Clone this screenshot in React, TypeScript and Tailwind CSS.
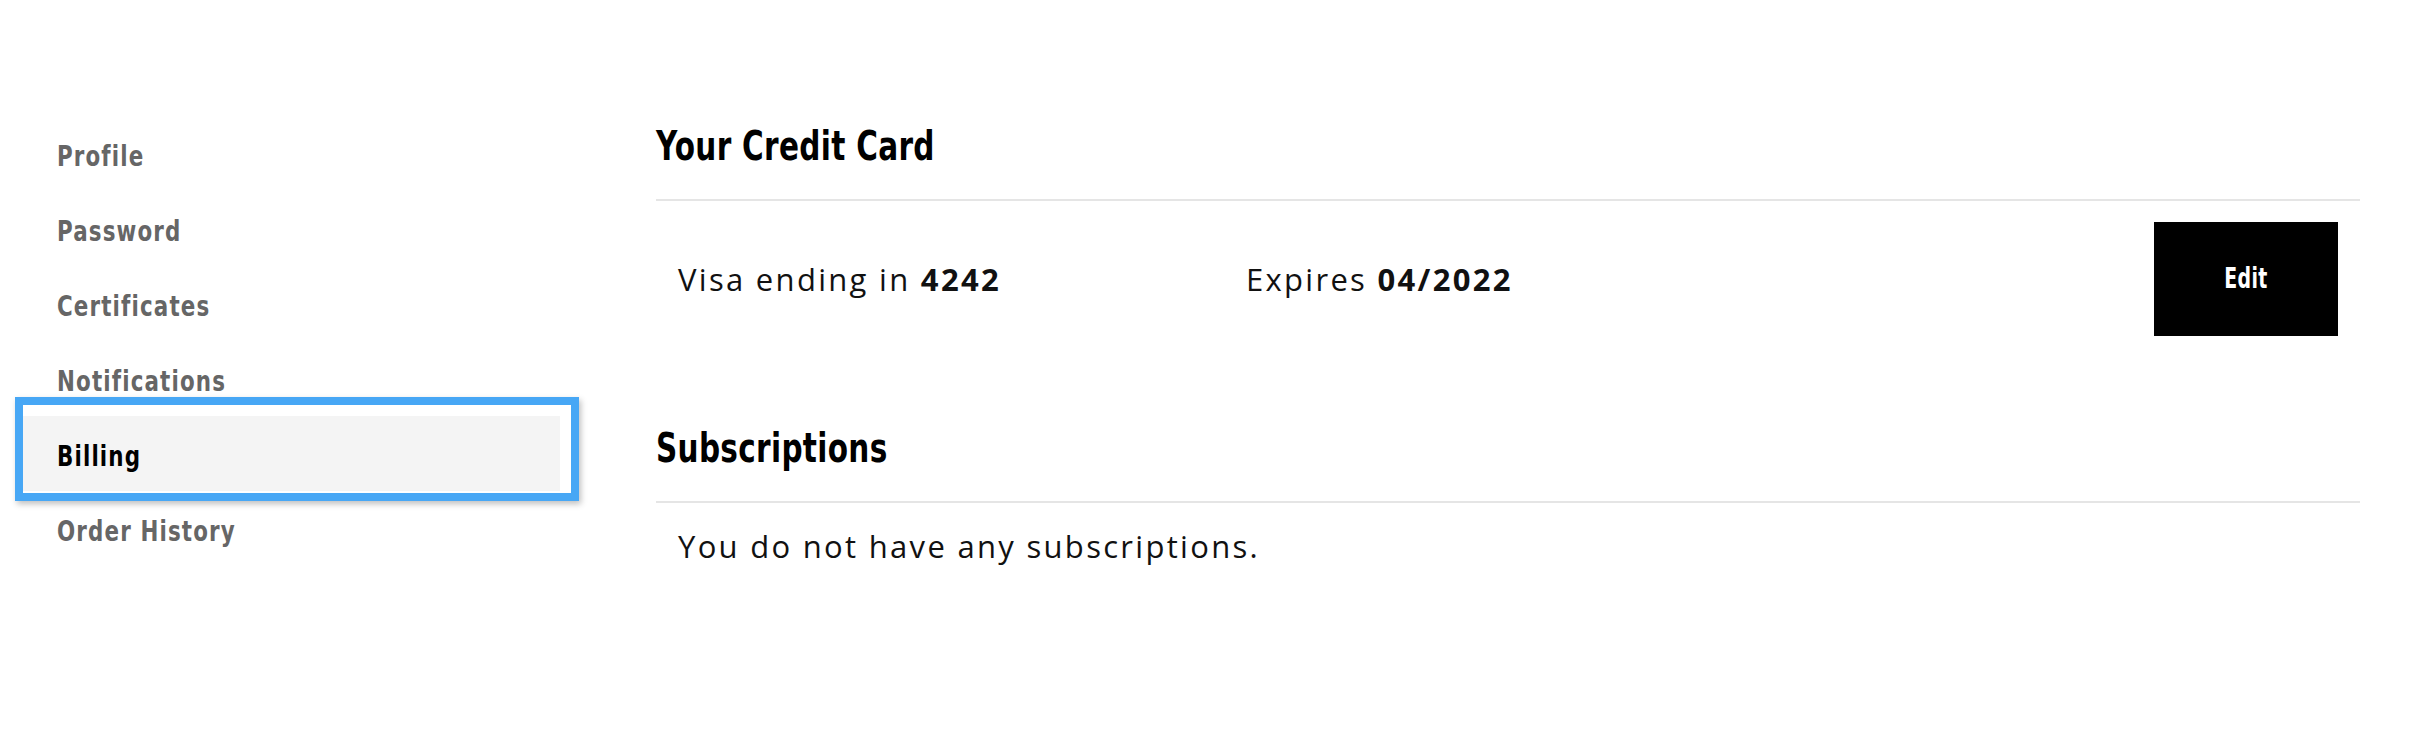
import React from 'react';

const narrow = { fontFamily: '"DejaVu Sans Condensed", "DejaVu Sans", sans-serif' };
const body = { fontFamily: '"Open Sans", Lato, sans-serif' };

const navItems = ['Profile', 'Password', 'Certificates', 'Notifications', 'Billing', 'Order History'];

function NavItem({ label, active }: { label: string; active: boolean }) {
  return (
    <div
      className={
        'relative flex h-[75px] w-[540px] items-center pl-[37px] pt-[6px] text-[29px] font-bold tracking-[1.4px] ' +
        (active ? 'bg-[#f4f4f4] text-black' : 'text-[#666666]')
      }
      style={narrow}
    >
      <span className="inline-block origin-left scale-x-[0.82] whitespace-nowrap">{label}</span>
      {active && (
        <div className="pointer-events-none absolute -top-[19px] -right-[19px] -bottom-[10px] -left-[5px] border-[8px] border-[#47a7f5] shadow-[2px_3px_6px_rgba(0,0,0,0.25)]" />
      )}
    </div>
  );
}

function SectionTitle({ children }: { children: React.ReactNode }) {
  return (
    <div className="border-b-2 border-[#e5e5e5] pb-[29px]">
      <h2 className="text-[40px] font-bold leading-[48px] tracking-[0.4px] text-black" style={narrow}>
        <span className="inline-block origin-left scale-x-[0.82] whitespace-nowrap">{children}</span>
      </h2>
    </div>
  );
}

export default function App() {
  return (
    <div className="min-h-[750px] w-full bg-white">
      <div className="flex pt-[116px]">
        <nav className="w-[656px] shrink-0 pl-[20px]">
          {navItems.map((item) => (
            <NavItem key={item} label={item} active={item === 'Billing'} />
          ))}
        </nav>
        <main className="mr-[50px] flex-1 pt-[6px]">
          <SectionTitle>Your Credit Card</SectionTitle>
          <div className="flex items-center px-[22px] py-[21px] text-[31px] leading-[36px] tracking-[2.3px] text-[#111]" style={body}>
            <div className="w-[568px]">
              Visa ending in <span className="font-bold">4242</span>
            </div>
            <div className="flex-1">
              Expires <span className="font-bold">04/2022</span>
            </div>
            <button
              className="flex h-[114px] w-[184px] items-center justify-center bg-black text-[28px] font-bold tracking-[0.5px] text-white"
              style={narrow}
            >
              <span className="inline-block scale-x-[0.75]">Edit</span>
            </button>
          </div>
          <div className="mt-[67px]">
            <SectionTitle>Subscriptions</SectionTitle>
          </div>
          <p className="px-[22px] pt-[25px] text-[31px] leading-[36px] tracking-[2.3px] text-[#111]" style={body}>
            You do not have any subscriptions.
          </p>
        </main>
      </div>
    </div>
  );
}
